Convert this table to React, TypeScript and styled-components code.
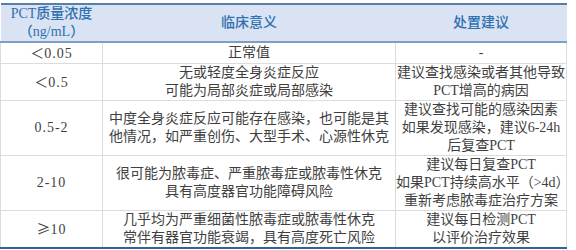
import React from "react";
import styled, { createGlobalStyle } from "styled-components";

const GlobalStyle = createGlobalStyle`
  body {
    margin: 0;
    background: #ffffff;
    font-family: "Liberation Serif", "Noto Sans CJK SC", serif;
  }
`;

const Page = styled.div`
  padding-top: 3px;
  width: 576px;
`;

const Table = styled.table`
  width: 566px;
  border-collapse: collapse;
  table-layout: fixed;
  font-size: 14px;
  line-height: 18px;
  color: #3f3f3f;
  border-bottom: 2px solid #2f6394;
`;

const HeadRow = styled.tr`
  background-color: #dae3f3;
  border-top: 2px solid #587fa6;
  border-bottom: 2px solid #7f9fc2;
  height: 38px;
`;

const HeadCell = styled.th`
  padding: 0;
  color: #2f70b0;
  font-weight: 500;
  text-align: center;
  vertical-align: middle;
`;

const Row = styled.tr<{ $h: number }>`
  height: ${(p) => p.$h}px;
`;

const Cell = styled.td`
  padding: 0;
  border: 1px solid #dcdcdc;
  text-align: center;
  vertical-align: middle;
  white-space: nowrap;
`;

const LevelCell = styled(Cell)`
  letter-spacing: 1px;
`;

const Wide = styled.span`
  font-family: "Noto Sans CJK SC", sans-serif;
  letter-spacing: 0;
`;

const Lines = ({ items }: { items: React.ReactNode[] }) => (
  <>
    {items.map((t, i) => (
      <div key={i}>{t}</div>
    ))}
  </>
);

const rows: { h: number; level: React.ReactNode; meaning: string[]; advice: string[] }[] = [
  { h: 18, level: <><Wide>＜</Wide>0.05</>, meaning: ["正常值"], advice: ["-"] },
  {
    h: 36,
    level: <><Wide>＜</Wide>0.5</>,
    meaning: ["无或轻度全身炎症反应", "可能为局部炎症或局部感染"],
    advice: ["建议查找感染或者其他导致", "PCT增高的病因"],
  },
  {
    h: 54,
    level: "0.5-2",
    meaning: ["中度全身炎症反应可能存在感染，也可能是其", "他情况，如严重创伤、大型手术、心源性休克"],
    advice: ["建议查找可能的感染因素", "如果发现感染，建议6-24h", "后复查PCT"],
  },
  {
    h: 51,
    level: "2-10",
    meaning: ["很可能为脓毒症、严重脓毒症或脓毒性休克", "具有高度器官功能障碍风险"],
    advice: ["建议每日复查PCT", "如果PCT持续高水平（>4d）", "重新考虑脓毒症治疗方案"],
  },
  {
    h: 34,
    level: (
      <>
        <Wide>≥</Wide>10
      </>
    ),
    meaning: ["几乎均为严重细菌性脓毒症或脓毒性休克", "常伴有器官功能衰竭，具有高度死亡风险"],
    advice: ["建议每日检测PCT", "以评价治疗效果"],
  },
];

export default function App() {
  return (
    <Page>
      <GlobalStyle />
      <Table>
        <colgroup>
          <col style={{ width: 102 }} />
          <col style={{ width: 293 }} />
          <col style={{ width: 171 }} />
        </colgroup>
        <thead>
          <HeadRow>
            <HeadCell>
              <div>PCT质量浓度</div>
              <div>（ng/mL）</div>
            </HeadCell>
            <HeadCell>临床意义</HeadCell>
            <HeadCell>处置建议</HeadCell>
          </HeadRow>
        </thead>
        <tbody>
          {rows.map((r, i) => (
            <Row key={i} $h={r.h}>
              <LevelCell>{r.level}</LevelCell>
              <Cell>
                <Lines items={r.meaning} />
              </Cell>
              <Cell>
                <Lines items={r.advice} />
              </Cell>
            </Row>
          ))}
        </tbody>
      </Table>
    </Page>
  );
}
